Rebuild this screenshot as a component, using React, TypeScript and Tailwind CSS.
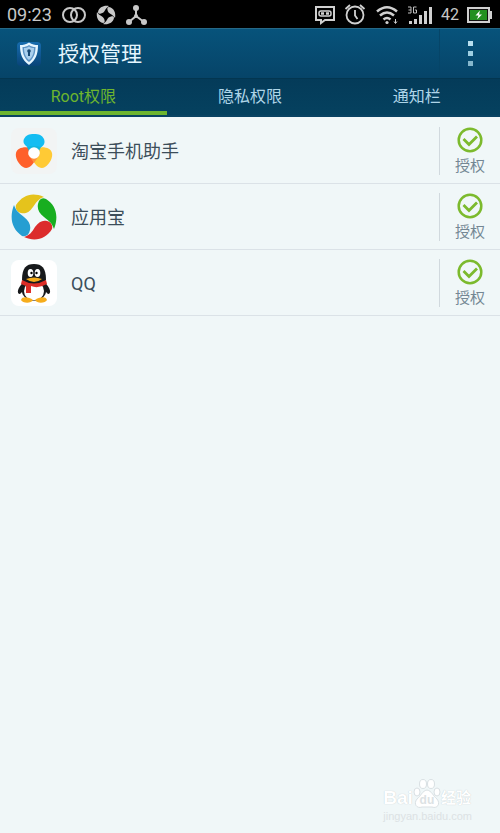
import type { ReactNode } from "react";

function Rings() {
  return (
    <svg className="w-[26px] h-[18px]" viewBox="0 0 26 18" fill="none" stroke="#c8c8c8" strokeWidth="2">
      <circle cx="9" cy="9" r="7" />
      <circle cx="17" cy="9" r="7" />
    </svg>
  );
}

function Swirl() {
  return (
    <svg className="w-5 h-5" viewBox="0 0 20 20" fill="#c8c8c8">
      <path d="M2 7C3 2 8 0 13 1C9 3 9 8 5 8.500C3 9 2 8.500 2 7Z" />
      <path d="M13 2C18 3 20 8 19 13C17 9 12 9 11.500 5C11 3 11.500 2 13 2Z" />
      <path d="M18 13C17 18 12 20 7 19C11 17 11 12 15 11.500C17 11 18 11.500 18 13Z" />
      <path d="M7 18C2 17 0 12 1 7C3 11 8 11 8.500 15C9 17 8.500 18 7 18Z" />
    </svg>
  );
}

function Hub() {
  return (
    <svg className="w-[22px] h-5" viewBox="0 0 22 20" fill="none" stroke="#c8c8c8" strokeWidth="2">
      <path d="M11 3V11L4 17M11 11L19 17" />
      <g fill="#c8c8c8" stroke="none">
        <circle cx="11" cy="3" r="3" />
        <circle cx="4" cy="17" r="3" />
        <circle cx="19" cy="17" r="3" />
        <circle cx="11" cy="11" r="2" />
      </g>
    </svg>
  );
}

function Message() {
  return (
    <svg className="w-[21px] h-5" viewBox="0 0 21 20" fill="none" stroke="#d0d0d0" strokeWidth="2">
      <path d="M1 2H19V15H10L6 18V15H1Z" />
      <rect x="4" y="6" width="12" height="5" rx="2" strokeWidth="1.500" />
      <path d="M6 8.500H9M11 8.500H14" strokeWidth="2.500" />
    </svg>
  );
}

function Alarm() {
  return (
    <svg className="w-[22px] h-[21px]" viewBox="0 0 22 21" fill="none" stroke="#d0d0d0" strokeWidth="1.800">
      <circle cx="11" cy="11" r="8.500" />
      <path d="M11 6V11.500L13.500 15M1.500 5L6 1M16 1L20.500 5" />
    </svg>
  );
}

function Wifi() {
  return (
    <svg className="w-[25px] h-5" viewBox="0 0 25 20" fill="none" stroke="#d0d0d0" strokeWidth="2.500">
      <path d="M3 6.500Q13-2 23 6.500M6 10.500Q13 4.500 20 10.500M9.500 14.500Q13 11.500 16.500 14.500" />
      <circle cx="13" cy="17.500" r="1.600" fill="#d0d0d0" stroke="none" />
      <path d="M21.500 14V18M20 16.500L21.500 18.500L23 16.500" strokeWidth="1" />
    </svg>
  );
}

function Signal() {
  return (
    <svg className="w-[26px] h-[18px]" viewBox="0 0 26 18" fill="#d0d0d0">
      <path d="M2 15H5V18H2ZM7 13H10V18H7ZM12 9H15V18H12ZM17 5H20V18H17ZM22 1H25V18H22Z" />
      <path d="M1 1H4V7H1M1.500 4H4M9.500 1H6.500V7H9.500V4H8" fill="none" stroke="#c0c0c0" />
    </svg>
  );
}

function Battery() {
  return (
    <svg className="w-[25px] h-4" viewBox="0 0 25 16">
      <rect x="1" y="1" width="21" height="14" fill="#111" stroke="#d0d0d0" strokeWidth="2" />
      <path d="M23 4H25V12H23Z" fill="#d0d0d0" />
      <rect x="3" y="3" width="17" height="10" fill="#239020" />
      <path d="M13 3.500L8.500 8.500H11.500L10 12.500L15 7.500H12Z" fill="#fff" />
    </svg>
  );
}

function Shield() {
  return (
    <svg className="w-6 h-6" viewBox="0 0 24 24">
      <defs>
        <linearGradient id="shieldTile" x1="0" y1="0" x2="0" y2="1">
          <stop stopColor="#176cae" />
          <stop offset="1" stopColor="#084478" />
        </linearGradient>
      </defs>
      <rect width="24" height="24" rx="4" fill="url(#shieldTile)" />
      <path d="M12 .5C9 2.500 6 3 3 3C3 12 5 18 12 23C19 18 21 12 21 3C18 3 15 2.500 12 .5Z" fill="#e4f5ff" />
      <path d="M12 3C10 4.500 8 5 5.500 5C5.500 12 7.500 16.500 12 20C16.500 16.500 18.500 12 18.500 5C16 5 14 4.500 12 3Z" fill="#5d94c5" />
      <path d="M12 4.500C10.500 5.500 9 6 7 6C7 12 9 15.500 12 18C15 15.500 17 12 17 6C15 6 13.500 5.500 12 4.500Z" fill="#a9cfed" />
      <circle cx="12" cy="9" r="1.800" fill="#164874" />
      <path d="M11 9H13V14H11Z" fill="#164874" />
    </svg>
  );
}

function TaobaoIcon() {
  return (
    <svg className="w-[46px] h-[46px]" viewBox="0 0 46 46">
      <rect width="46" height="46" rx="8" fill="#f2f4f4" />
      <path d="M18 20C12 17 12 13 13 11C15 7 18 6 23 6C28 6 31 7 33 11C34 14 34 17 29 20L26 23H20Z" fill="#14bdf2" />
      <path d="M20 20C13 18 6 20 5 25C4 29 7 36 12 39C17 42 22 37 24 32L26 23Z" fill="#ff602b" />
      <path d="M26 20C33 18 40 20 41 25C42 29 39 36 34 39C29 42 24 37 22 32L20 23Z" fill="#ffca35" />
      <path d="M17 26L23 35L29 26Z" fill="#ff903d" />
      <path d="M16 19Q23 17 30 19L28 23H18Z" fill="#13b6dd" />
      <circle cx="23" cy="25" r="5.800" fill="#fff" />
    </svg>
  );
}

function YingyongbaoIcon() {
  return (
    <svg className="w-[46px] h-[46px]" viewBox="0 0 46 46">
      <path d="M5 11C12 1 21-2 33 3C27 5 25 9 22 13C18 19 14 20 10 19C6 18 4 15 5 11Z" fill="#e5c31c" />
      <path d="M35 5C45 11 48 22 43 35C41 29 38 27 33 23C28 19 26 15 27 10C28 5 31 3 35 5Z" fill="#18ae20" />
      <path d="M41 35C35 45 24 48 13 43C19 41 21 38 24 33C28 28 31 26 36 27C40 28 42 31 41 35Z" fill="#dc2c2c" />
      <path d="M11 42C1 35-2 24 3 11C5 17 8 19 13 23C18 27 20 31 19 36C18 41 15 43 11 42Z" fill="#269ed2" />
    </svg>
  );
}

function QQIcon() {
  return (
    <svg className="w-[46px] h-[46px]" viewBox="0 0 46 46">
      <rect width="46" height="46" rx="8" fill="#fff" />
      <path d="M12 23C7 27 5 34 9 34L15 28M34 23C39 27 41 34 37 34L31 28" fill="#17191b" />
      <ellipse cx="23" cy="29" rx="12.500" ry="12" fill="#17191b" />
      <ellipse cx="23" cy="31" rx="10" ry="9.500" fill="#fff" />
      <path d="M11 20C11 8 15 4 23 4C31 4 35 8 35 20L32 24H14Z" fill="#17191b" />
      <ellipse cx="19.500" cy="13" rx="2.800" ry="4" fill="#fff" />
      <ellipse cx="26.500" cy="13" rx="2.800" ry="4" fill="#fff" />
      <circle cx="20.500" cy="13" r="1.200" />
      <circle cx="25.500" cy="13" r="1.200" />
      <path d="M15 19Q23 16 31 19Q23 25 15 19Z" fill="#f6ad1c" />
      <path d="M11 20Q23 27 35 20L36 24Q27 29 20 26V33H15V26L10 24Z" fill="#dd2d27" />
      <path d="M10 40C11 36 18 37 22 40C20 44 11 43 10 40ZM24 40C28 37 35 36 36 40C35 43 26 44 24 40Z" fill="#f6ad1c" />
    </svg>
  );
}

function Check() {
  return (
    <svg className="h-[26px] w-[26px] shrink-0" viewBox="0 0 26 26" fill="none" stroke="#7cba2d" strokeWidth="2.500">
      <circle cx="13" cy="13" r="11.300" />
      <path d="M6.500 12L12 17.500L20 9.500" strokeWidth="2.800" />
    </svg>
  );
}

function Row({ name, icon }: { name: string; icon: ReactNode }) {
  return (
    <li className="flex h-[66px] items-center border-b border-[#dbe2e7] pl-[11px]">
      {icon}
      <span className="ml-[14px] flex-1 pt-[3px] text-[18px] leading-6 text-[#3c4e5a]">{name}</span>
      <button aria-label={`${name} 授权`} className="flex h-12 w-[61px] flex-col items-center justify-center border-l border-[#d1d9de] text-[15px] leading-4 text-[#748794]">
        <Check />
        <span className="mt-[5px]">授权</span>
      </button>
    </li>
  );
}

function Watermark() {
  return (
    <div className="absolute right-7 bottom-[11px] text-[#dce2e4]">
      <div className="flex h-8 items-end">
        <span className="font-['Liberation_Sans'] text-[19px] leading-6 font-bold text-white [text-shadow:0_0_1px_#bac4c8]">Bai</span>
        <div className="relative h-8 w-7">
          <svg className="h-8 w-7" viewBox="0 0 28 32" fill="#fff" stroke="#d9e0e3">
            <ellipse cx="4" cy="14" rx="3" ry="4" />
            <ellipse cx="10" cy="6" rx="3.500" ry="4.500" />
            <ellipse cx="18" cy="6" rx="3.500" ry="4.500" />
            <ellipse cx="24" cy="14" rx="3" ry="4" />
            <path d="M14 12C9 13 8 18 4 21C0 26 4 31 9 29H19C24 31 28 26 24 21C20 18 19 13 14 12Z" />
          </svg>
          <span className="absolute inset-x-0 bottom-1 text-center font-['Liberation_Sans'] text-[12px] leading-3 font-bold">du</span>
        </div>
        <span className="text-[15px] leading-6 font-bold text-white [text-shadow:0_0_1px_#bac4c8]">经验</span>
      </div>
      <div className="font-['Liberation_Sans'] text-[11px] leading-3">jingyan.baidu.com</div>
    </div>
  );
}

export default function App() {
  return (
    <main className="relative min-h-screen bg-[#f0f7f8] font-[Roboto,'Noto_Sans_CJK_SC',sans-serif]">
      <div className="flex h-7 items-center justify-between bg-black pt-px pr-2 pl-[7px] text-[#c8c8c8]">
        <div className="flex items-center gap-[9px]">
          <span className="pt-px text-[18px] leading-5">09:23</span>
          <Rings />
          <Swirl />
          <Hub />
        </div>
        <div className="flex items-center gap-2">
          <Message />
          <Alarm />
          <Wifi />
          <Signal />
          <span className="pt-px text-[16px] leading-5">42</span>
          <Battery />
        </div>
      </div>
      <header className="flex h-[50px] items-center border-t border-[#266987] bg-linear-to-b from-[#07537b] to-[#064468] pl-[17px]">
        <Shield />
        <h1 className="ml-[17px] flex-1 text-[21px] leading-7 font-normal text-[#e5f6ff]">授权管理</h1>
        <button aria-label="更多" className="flex h-full w-[61px] flex-col items-center justify-center gap-[5px] border-l border-[#064568]">
          <span className="size-[5px] bg-[#b9dfef]" />
          <span className="size-[5px] bg-[#9fcfe2]" />
          <span className="size-[5px] bg-[#86b7cc]" />
        </button>
      </header>
      <nav className="grid h-[39px] grid-cols-3 border-t border-b-2 border-t-[#033650] border-b-[#0a4363] bg-linear-to-b from-[#043b59] to-[#05415f] text-[16px] leading-7 text-[#aed5e8]">
        <button className="border-b-4 border-[#6db52e] pt-1 text-[#6db52e]">Root权限</button>
        <button className="border-b-4 border-transparent pt-1">隐私权限</button>
        <button className="border-b-4 border-transparent pt-1">通知栏</button>
      </nav>
      <ul className="pt-px">
        <Row name="淘宝手机助手" icon={<TaobaoIcon />} />
        <Row name="应用宝" icon={<YingyongbaoIcon />} />
        <Row name="QQ" icon={<QQIcon />} />
      </ul>
      <Watermark />
    </main>
  );
}
